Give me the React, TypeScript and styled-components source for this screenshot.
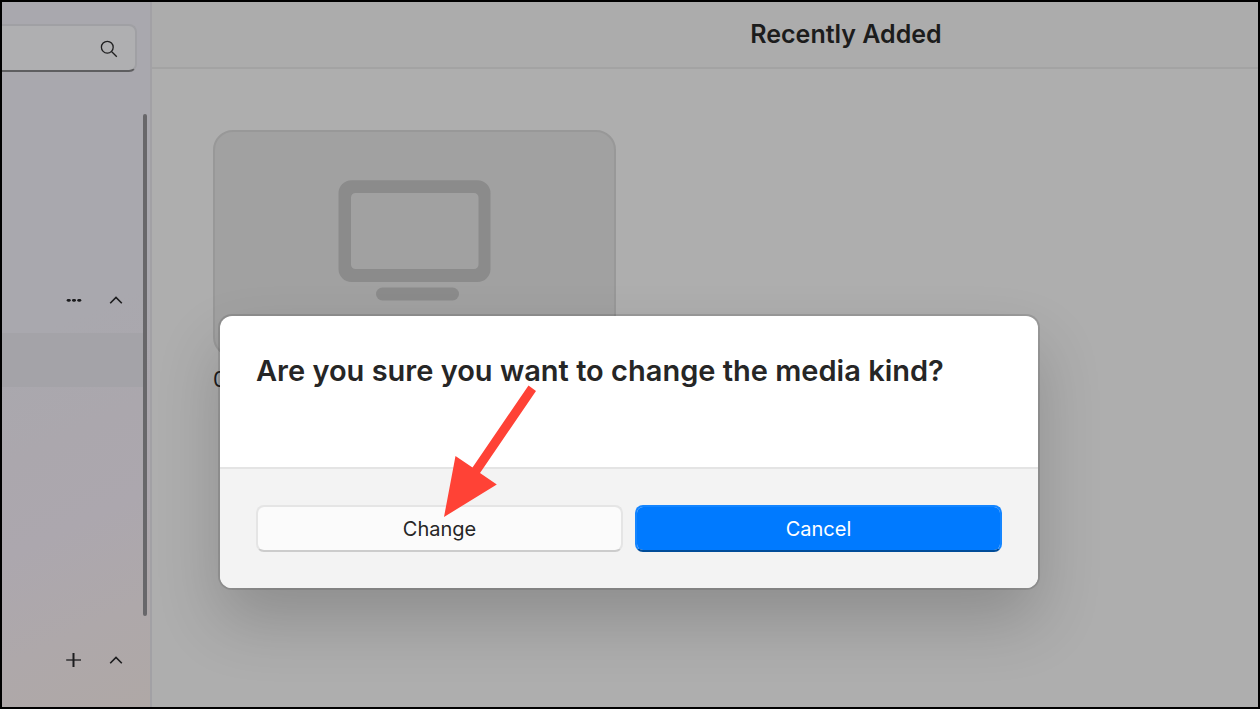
import React from "react";
import styled, { createGlobalStyle } from "styled-components";

const GlobalStyle = createGlobalStyle`
  *, *::before, *::after { box-sizing: border-box; }
  body { margin: 0; }
  body, button, input { font-family: Inter, "Liberation Sans", sans-serif; }
  h1, h2, p, figure { margin: 0; }
`;

const Frame = styled.div`
  position: relative;
  display: flex;
  min-height: 100vh;
  border: 2px solid #000;
  background: #aeaeae;
  color: #1c1c1c;
  overflow: hidden;
`;

const Sidebar = styled.aside`
  flex: none;
  display: flex;
  flex-direction: column;
  width: 150px;
  border-right: 2px solid #a2a1a5;
  background: linear-gradient(155deg, #a9a8ae 0%, #a9a8ae 45%, #aba7ad 60%, #aca7ae 72%, #aea8aa 86%, #afa8a6 100%);
`;

const SearchBox = styled.label`
  display: flex;
  align-items: center;
  height: 48px;
  margin: 22px 13px 0 0;
  padding: 2px 17px 0 0;
  border: 2px solid #a0a0a4;
  border-left: 0;
  border-bottom-color: #5e5e60;
  border-radius: 0 8px 8px 0;
  background: #afafb1;
`;

const SearchInput = styled.input`
  flex: 1;
  min-width: 0;
  border: 0;
  outline: 0;
  background: transparent;
  font-size: 20px;
`;

const ScrollArea = styled.nav`
  display: flex;
  height: 502px;
  margin-top: 42px;
`;

const ScrollContent = styled.div`
  flex: 1;
  padding-top: 159px;
`;

const ScrollThumb = styled.div`
  width: 4px;
  margin-right: 3px;
  border-radius: 2px;
  background: #68676a;
`;

const SectionBar = styled.div`
  display: flex;
  align-items: center;
  gap: 18px;
  height: 54px;
  padding-left: 60px;
`;

const IconButton = styled.button`
  display: grid;
  place-items: center;
  width: 24px;
  height: 24px;
  padding: 0;
  border: 0;
  background: transparent;
  color: #1c1c1e;
`;

const SelectedRow = styled.div`
  height: 54px;
  margin-top: 6px;
  background: #a4a3a8;
`;

const SidebarFooter = styled.div`
  margin-top: 17px;
`;

const Main = styled.main`
  flex: 1;
  min-width: 0;
`;

const Header = styled.header`
  display: flex;
  align-items: center;
  justify-content: center;
  height: 67px;
  padding: 0 0 2px 282px;
  border-bottom: 2px solid #a3a3a3;
  background: #acacac;
`;

const PageTitle = styled.h1`
  font-size: 25px;
  line-height: 32px;
  font-weight: 600;
`;

const Library = styled.section`
  padding: 61px;
`;

const MediaItem = styled.figure`
  width: 403px;
`;

const Artwork = styled.div`
  display: flex;
  justify-content: center;
  height: 227px;
  padding-top: 48px;
  border: 2px solid #989898;
  border-radius: 20px;
  background: #a1a1a1;
`;

const Caption = styled.figcaption`
  margin-top: 8px;
  font-size: 21px;
  line-height: 30px;
`;

const Overlay = styled.div`
  position: absolute;
  inset: 0;
  display: flex;
  justify-content: center;
  align-items: flex-start;
  padding: 314px 220px 0 218px;
`;

const Dialog = styled.div`
  position: relative;
  flex: 1;
  max-width: 818px;
  border-radius: 12px;
  background: #fff;
  box-shadow: 0 0 0 2px rgba(0, 0, 0, 0.11), 0 32px 64px rgba(0, 0, 0, 0.19);
`;

const DialogBody = styled.div`
  min-height: 151px;
  padding: 36px;
`;

const DialogTitle = styled.h2`
  color: #262626;
  font-size: 29px;
  line-height: 38px;
  font-weight: 600;
`;

const DialogFooter = styled.div`
  display: grid;
  grid-template-columns: 1fr 1fr;
  gap: 12px;
  padding: 36px;
  border-top: 2px solid #e4e4e4;
  border-radius: 0 0 12px 12px;
  background: #f3f3f3;
`;

const DialogButton = styled.button<{ $primary?: boolean }>`
  height: 47px;
  padding: 0;
  border: 2px solid ${(p) => (p.$primary ? "#1485ff" : "#e5e5e5")};
  border-bottom-color: ${(p) => (p.$primary ? "#004c99" : "#cccccc")};
  border-radius: 8px;
  background: ${(p) => (p.$primary ? "#007aff" : "#fbfbfb")};
  background-clip: padding-box;
  color: ${(p) => (p.$primary ? "#ffffff" : "#262626")};
  font-size: 20px;
  line-height: 28px;
`;

const Arrow = styled.svg`
  position: absolute;
  left: 224px;
  top: 69px;
  pointer-events: none;
`;

const SearchIcon = () => (
  <svg width="18" height="18" viewBox="0 0 18 18" fill="none" stroke="#1f1f20" strokeWidth="1.3" aria-hidden="true">
    <circle cx="7.3" cy="7.2" r="5.9" />
    <path d="M11.5 11.5L16.8 16.8" />
  </svg>
);

const ChevronUp = () => (
  <svg width="14" height="10" viewBox="0 0 14 10" fill="none" stroke="currentColor" strokeWidth="1.6" aria-hidden="true">
    <path d="M1.2 8.2L7 2.4L12.8 8.2" />
  </svg>
);

const MoreIcon = () => (
  <svg width="16" height="4" viewBox="0 0 16 4" fill="currentColor" aria-hidden="true">
    <rect x="0.7" y="0.9" width="4" height="2.8" rx="1.4" />
    <rect x="6" y="0.9" width="4" height="2.8" rx="1.4" />
    <rect x="11.3" y="0.9" width="4" height="2.8" rx="1.4" />
  </svg>
);

const PlusIcon = () => (
  <svg width="16" height="16" viewBox="0 0 16 16" fill="none" stroke="currentColor" aria-hidden="true">
    <path d="M0.2 8H15" strokeWidth="1.3" />
    <path d="M7.5 1V15" strokeWidth="2" />
  </svg>
);

const TvIcon = () => (
  <svg width="153" height="122" viewBox="0 0 153 122" aria-hidden="true">
    <path
      fill="#8b8b8b"
      fillRule="evenodd"
      d="M13.5 0.3H139.5A13 13 0 0 1 152.5 13.3V89A13 13 0 0 1 139.5 102H13.5A13 13 0 0 1 0.5 89V13.3A13 13 0 0 1 13.5 0.3ZM17.5 13A4.5 4.5 0 0 0 13 17.500V84.500A4.500 4.500 0 0 0 17.500 89H136A4.500 4.500 0 0 0 140.500 84.500V17.500A4.500 4.500 0 0 0 136 13Z"
    />
    <rect x="38" y="107.5" width="83" height="13" rx="6.5" fill="#8b8b8b" />
  </svg>
);

export default function App() {
  return (
    <Frame>
      <GlobalStyle />
      <Sidebar>
        <SearchBox>
          <SearchInput type="text" aria-label="Search" />
          <SearchIcon />
        </SearchBox>
        <ScrollArea>
          <ScrollContent>
            <SectionBar>
              <IconButton type="button" aria-label="More options"><MoreIcon /></IconButton>
              <IconButton type="button" aria-label="Collapse library"><ChevronUp /></IconButton>
            </SectionBar>
            <SelectedRow />
          </ScrollContent>
          <ScrollThumb />
        </ScrollArea>
        <SidebarFooter>
          <SectionBar>
            <IconButton type="button" aria-label="Add playlist"><PlusIcon /></IconButton>
            <IconButton type="button" aria-label="Collapse playlists"><ChevronUp /></IconButton>
          </SectionBar>
        </SidebarFooter>
      </Sidebar>
      <Main>
        <Header>
          <PageTitle>Recently Added</PageTitle>
        </Header>
        <Library>
          <MediaItem>
            <Artwork><TvIcon /></Artwork>
            <Caption>0</Caption>
          </MediaItem>
        </Library>
      </Main>
      <Overlay>
        <Dialog role="dialog" aria-modal="true" aria-labelledby="dialog-title">
          <DialogBody>
            <DialogTitle id="dialog-title">Are you sure you want to change the media kind?</DialogTitle>
          </DialogBody>
          <DialogFooter>
            <DialogButton type="button">Change</DialogButton>
            <DialogButton type="button" $primary>Cancel</DialogButton>
          </DialogFooter>
          <Arrow width="93" height="133" viewBox="0 0 93 133" aria-hidden="true">
            <path d="M0 132L11.5 71L28.5 82.5L84.5 0.5L92 6L36 88L52.8 99.5Z" fill="#ff4236" />
          </Arrow>
        </Dialog>
      </Overlay>
    </Frame>
  );
}
